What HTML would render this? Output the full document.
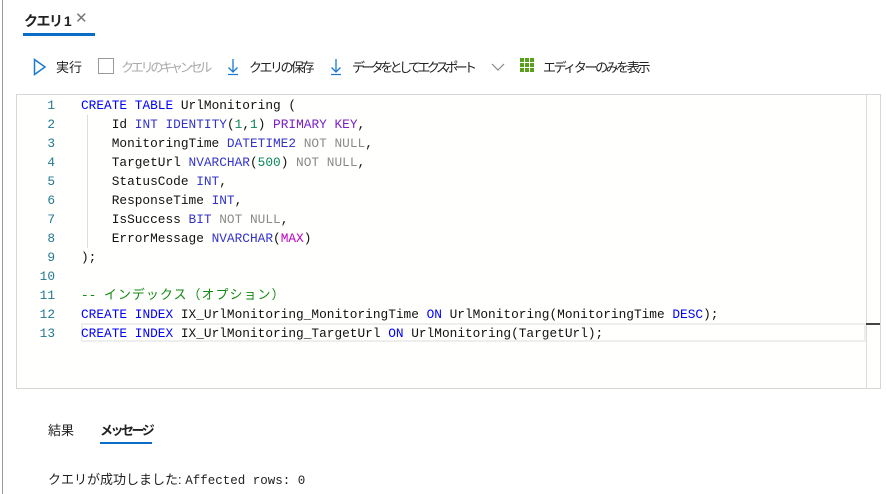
<!DOCTYPE html>
<html><head><meta charset="utf-8"><style>
*{margin:0;padding:0;box-sizing:border-box}
body{width:887px;height:494px;background:#fff;position:relative;overflow:hidden;font-family:"Liberation Sans","Noto Sans CJK JP",sans-serif;color:#222}
.vl{position:absolute;left:2px;top:0;width:1px;height:494px;background:#999}
.abs{position:absolute;white-space:nowrap}
.tb{font-size:13px;top:57px}
.ed{position:absolute;left:16px;top:94px;width:865px;height:295px;border:1px solid #d6d6d6;background:#fffffd}
.sb{position:absolute;left:849px;top:0;width:1px;height:293px;background:#ddd}
.ln{position:absolute;left:0;width:38px;text-align:right;font-family:"Liberation Mono",monospace;font-size:12.8px;color:#237893}
.cd{position:absolute;left:64px;font-family:"Liberation Mono","Noto Sans CJK JP",monospace;font-size:12.8px;color:#111;white-space:pre}
.k{color:#0000ff}.t{color:#3333cc}.p{color:#7a1fc9}.g{color:#8a8a8a}.n{color:#098658}.m{color:#c000c0}.c{color:#118811}
</style></head><body>
<div class="vl"></div>
<div class="abs" style="left:24px;top:11px;font-size:14px;font-weight:bold;letter-spacing:-1.5px">クエリ 1</div>
<div class="abs" style="left:75px;top:9px;font-size:15px;color:#777">✕</div>
<div style="position:absolute;left:23px;top:33px;width:72px;height:3px;background:#0a6ec8"></div>

<svg class="abs" style="left:33px;top:58px" width="14" height="18"><path d="M1.5 1.5 L12 9 L1.5 16.5 Z" fill="none" stroke="#1a7ad0" stroke-width="1.5"/></svg>
<div class="abs tb" style="left:56px">実行</div>
<div class="abs" style="left:98px;top:58px;width:16px;height:16px;border:1.5px solid #999"></div>
<div class="abs tb" style="left:121px;color:#aaa;letter-spacing:-3.2px">クエリのキャンセル</div>
<svg class="abs" style="left:226px;top:58px" width="14" height="18"><path d="M7 1 V14 M2.5 9.5 L7 14 L11.5 9.5 M2 16.5 H12" fill="none" stroke="#1a7ad0" stroke-width="1.3"/></svg>
<div class="abs tb" style="left:249px;letter-spacing:-2.5px">クエリの保存</div>
<svg class="abs" style="left:329px;top:58px" width="14" height="18"><path d="M7 1 V14 M2.5 9.5 L7 14 L11.5 9.5 M2 16.5 H12" fill="none" stroke="#1a7ad0" stroke-width="1.3"/></svg>
<div class="abs tb" style="left:352px;letter-spacing:-3.6px">データを としてエクスポート</div>
<svg class="abs" style="left:491px;top:62px" width="14" height="10"><path d="M1 2 L7 8 L13 2" fill="none" stroke="#888" stroke-width="1.2"/></svg>
<svg class="abs" style="left:520px;top:58px" width="16" height="16"><g fill="#5a9e1e"><rect x="0" y="0" width="4" height="4"/><rect x="5" y="0" width="4" height="4"/><rect x="10" y="0" width="4" height="4"/><rect x="0" y="5" width="4" height="4"/><rect x="5" y="5" width="4" height="4"/><rect x="10" y="5" width="4" height="4"/><rect x="0" y="10" width="4" height="4"/><rect x="5" y="10" width="4" height="4"/><rect x="10" y="10" width="4" height="4"/></g></svg>
<div class="abs tb" style="left:543px;letter-spacing:-2.4px">エディターのみを表示</div>

<div class="ed">
<div class="sb"></div>
<div style="position:absolute;left:849px;top:228px;width:14px;height:2px;background:#444"></div>
<div style="position:absolute;left:64px;top:228px;width:785px;height:19px;border:2px solid #eee"></div>
<div style="position:absolute;left:70px;top:20px;width:1px;height:133px;background:#ddd"></div>
<div class="ln" style="top:1px;line-height:19px">1<br>2<br>3<br>4<br>5<br>6<br>7<br>8<br>9<br>10<br>11<br>12<br>13</div>
<div class="cd" style="top:1px;line-height:19px"><span class="k">CREATE</span> <span class="k">TABLE</span> UrlMonitoring (
    Id <span class="t">INT</span> <span class="t">IDENTITY</span>(<span class="n">1</span>,<span class="n">1</span>) <span class="p">PRIMARY</span> <span class="p">KEY</span>,
    MonitoringTime <span class="t">DATETIME2</span> <span class="g">NOT</span> <span class="g">NULL</span>,
    TargetUrl <span class="t">NVARCHAR</span>(<span class="n">500</span>) <span class="g">NOT</span> <span class="g">NULL</span>,
    StatusCode <span class="t">INT</span>,
    ResponseTime <span class="t">INT</span>,
    IsSuccess <span class="t">BIT</span> <span class="g">NOT</span> <span class="g">NULL</span>,
    ErrorMessage <span class="t">NVARCHAR</span>(<span class="m">MAX</span>)
);

<span class="c">-- <span style="letter-spacing:1.2px">インデックス（オプション）</span></span>
<span class="k">CREATE</span> <span class="k">INDEX</span> IX_UrlMonitoring_MonitoringTime <span class="k">ON</span> UrlMonitoring(MonitoringTime <span class="k">DESC</span>);
<span class="k">CREATE</span> <span class="k">INDEX</span> IX_UrlMonitoring_TargetUrl <span class="k">ON</span> UrlMonitoring(TargetUrl);</div>
</div>

<div class="abs" style="left:48px;top:420px;font-size:13px">結果</div>
<div class="abs" style="left:100px;top:420px;font-size:13px;font-weight:bold;letter-spacing:-2.5px">メッセージ</div>
<div style="position:absolute;left:100px;top:442px;width:52px;height:2px;background:#0a6ec8"></div>
<div class="abs" style="left:48px;top:469px;font-size:13px">クエリが成功しました: <span style="font-family:'Liberation Mono',monospace;font-size:12.5px">Affected rows: 0</span></div>
</body></html>
